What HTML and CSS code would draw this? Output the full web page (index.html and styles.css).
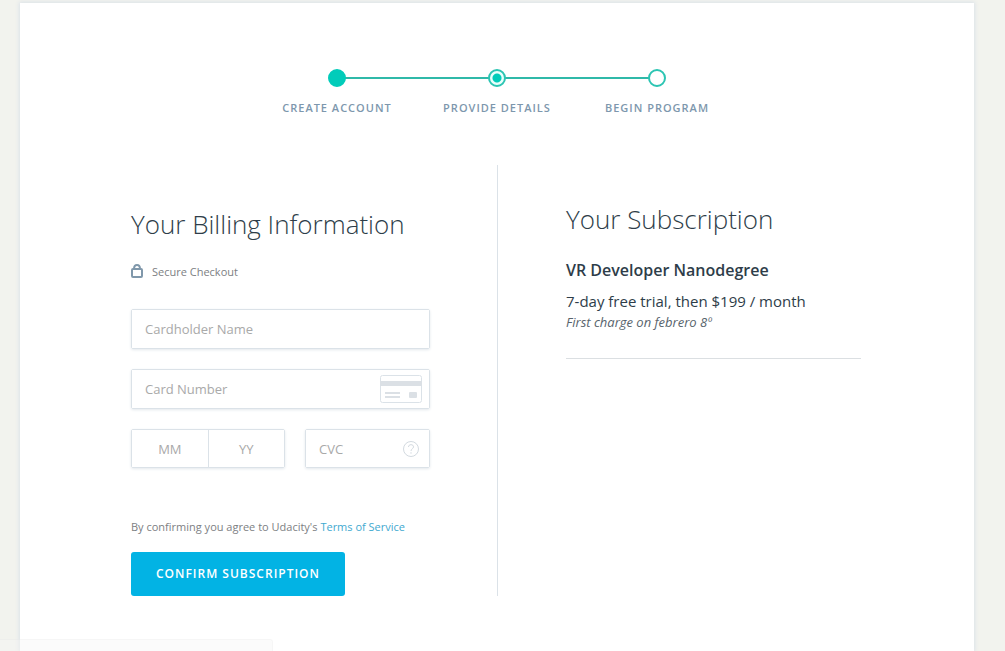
FILE: index.html
```html
<!DOCTYPE html>
<html lang="en">
<head>
<meta charset="utf-8">
<meta name="viewport" content="width=device-width, initial-scale=1">
<title>Billing Information</title>
<link rel="stylesheet" href="styles.css">
</head>
<body>
<main class="sheet">
  <ol class="steps">
    <li class="step"><span class="dot dot-done"></span><span class="step-label">Create Account</span></li>
    <li class="step" aria-current="step"><span class="dot dot-current"></span><span class="step-label">Provide Details</span></li>
    <li class="step"><span class="dot"></span><span class="step-label">Begin Program</span></li>
  </ol>
  <div class="columns">
    <section class="billing">
      <h1 class="title">Your Billing Information</h1>
      <p class="secure">
        <svg class="lock" width="13" height="16" viewBox="0 0 13 16" fill="none" stroke="#8098ab" stroke-width="2" aria-hidden="true"><rect x="1" y="5" width="10" height="8" rx="1"/><path d="M3 5C3 2.500 4 1 6 1S9 2.500 9 5"/></svg>
        Secure Checkout
      </p>
      <form class="form">
        <div class="field"><input class="input" type="text" aria-label="Cardholder Name" placeholder="Cardholder Name"></div>
        <div class="field">
          <input class="input" type="text" aria-label="Card Number" placeholder="Card Number">
          <svg class="card-icon" width="42" height="28" viewBox="0 0 42 28" aria-hidden="true"><rect x=".5" y=".5" width="41" height="27" rx="2" fill="#fff" stroke="#dbe2e8"/><path fill="#dbe0e5" d="M0 6h42v5H0zM5 17h15v2H5zM5 21h15v2H5z"/><rect x="29" y="17" width="8" height="6" rx="1" fill="#dbe0e5"/></svg>
        </div>
        <div class="row">
          <div class="field expiry">
            <input class="input" type="text" aria-label="Expiry month" placeholder="MM">
            <input class="input" type="text" aria-label="Expiry year" placeholder="YY">
          </div>
          <div class="field cvc">
            <input class="input" type="text" aria-label="CVC" placeholder="CVC">
            <svg class="help" width="16" height="16" viewBox="0 0 16 16" fill="none" stroke="#d3dae0" aria-hidden="true"><circle cx="8" cy="8" r="7.500"/><path d="M5.500 6C5.500 4.500 6.500 3.700 8 3.700s2.500.8 2.500 2.200C10.500 7.700 8 7.800 8 10M8 11.200v1.500"/></svg>
          </div>
        </div>
        <p class="terms">By confirming you agree to Udacity's <a class="link" href="#">Terms of Service</a></p>
        <button class="confirm" type="button">Confirm Subscription</button>
      </form>
    </section>
    <section class="subscription">
      <h2 class="title">Your Subscription</h2>
      <div class="plan">
        <h3 class="plan-name">VR Developer Nanodegree</h3>
        <p class="price">7-day free trial, then $199 / month</p>
        <p class="charge">First charge on febrero 8º</p>
      </div>
    </section>
  </div>
</main>
<div class="status"></div>
</body>
</html>
```
FILE: styles.css
```css
* { box-sizing: border-box; }
body {
  margin: 0;
  padding: 3px 31px 0 20px;
  background: #f2f3ee;
  color: #2e3d49;
  font-family: "Open Sans", "Noto Sans", sans-serif;
}
h1, h2, h3, p, ol { margin: 0; padding: 0; }
.sheet {
  min-height: calc(100vh - 3px);
  padding: 66px 24px 55px;
  background: #fff;
  box-shadow: 0 0 4px 1px #dbe2e8;
}
.steps {
  display: grid;
  grid-template-columns: repeat(3, 1fr);
  max-width: 480px;
  margin: 0 auto;
  list-style: none;
}
.step {
  position: relative;
  display: flex;
  flex-direction: column;
  align-items: center;
  gap: 12px;
}
.step + .step::before {
  content: "";
  position: absolute;
  top: 8px;
  right: 50%;
  width: 100%;
  height: 2px;
  background: #2fb9a9;
}
.dot {
  z-index: 1;
  width: 18px;
  height: 18px;
  border: 2px solid #2cc5b3;
  border-radius: 50%;
  background: #fff;
}
.dot-done { background: #02ccba; border-color: #02ccba; }
.dot-current { background: radial-gradient(circle, #02ccba 4px, #e9fffc 5px); }
.step-label {
  color: #7d97ad;
  font-size: 11px;
  font-weight: 600;
  line-height: 18px;
  letter-spacing: 1px;
  text-transform: uppercase;
  white-space: nowrap;
}
.columns {
  display: grid;
  grid-template-columns: 1fr 1fr;
  max-width: 732px;
  margin: 48px auto 0;
}
.billing { padding-top: 40px; }
.billing > * { max-width: 299px; }
.subscription {
  padding: 35px 2px 0 68px;
  border-left: 1px solid #dbe2e8;
}
.title {
  font-size: 26px;
  font-weight: 300;
  line-height: 38px;
  white-space: nowrap;
}
.secure {
  display: flex;
  align-items: center;
  gap: 8px;
  margin-top: 20px;
  color: #7d8083;
  font-size: 11px;
  line-height: 18px;
}
.form { margin-top: 28px; }
.field {
  position: relative;
  display: flex;
  height: 40px;
  margin-bottom: 20px;
  border: 1px solid #dbe2e8;
  border-radius: 2px;
  box-shadow: 0 1px 3px #e3e8ec;
}
.input {
  width: 100%;
  min-width: 0;
  padding: 0 13px;
  border: 0;
  background: #fff;
  color: #2e3d49;
  font: 13px "Open Sans", "Noto Sans", sans-serif;
}
.input::placeholder { color: #a9a9a9; opacity: 1; }
.card-icon { position: absolute; top: 5px; right: 7px; }
.help { position: absolute; top: 11px; right: 10px; }
.row {
  display: grid;
  grid-template-columns: 154fr 125fr;
  gap: 20px;
}
.row .field { height: 39px; margin: 0; }
.expiry .input { text-align: center; }
.expiry .input + .input { border-left: 1px solid #dbe2e8; }
.terms {
  margin-top: 50px;
  color: #7d8083;
  font-size: 11px;
  line-height: 18px;
  white-space: nowrap;
}
.link { color: #3fa9d0; text-decoration: none; }
.confirm {
  height: 44px;
  margin-top: 16px;
  padding: 0 25px 2px;
  border: 0;
  border-radius: 3px;
  background: #02b3e4;
  color: #fff;
  font: 600 12px "Open Sans", "Noto Sans", sans-serif;
  letter-spacing: 1px;
  text-transform: uppercase;
}
.plan {
  margin-top: 20px;
  padding-bottom: 26px;
  border-bottom: 1px solid #dbdfe2;
}
.plan-name { font-size: 16px; font-weight: 600; line-height: 24px; }
.price { margin-top: 8px; font-size: 15px; line-height: 22px; }
.charge { color: #58646d; font-size: 13px; font-style: italic; line-height: 20px; }
.status {
  position: fixed;
  bottom: 0;
  left: 0;
  width: 273px;
  height: 12px;
  border: 1px solid rgba(0, 0, 0, 0.02);
  border-width: 1px 1px 0 0;
  border-radius: 0 3px 0 0;
  background: rgba(245, 245, 245, 0.4);
}
```
